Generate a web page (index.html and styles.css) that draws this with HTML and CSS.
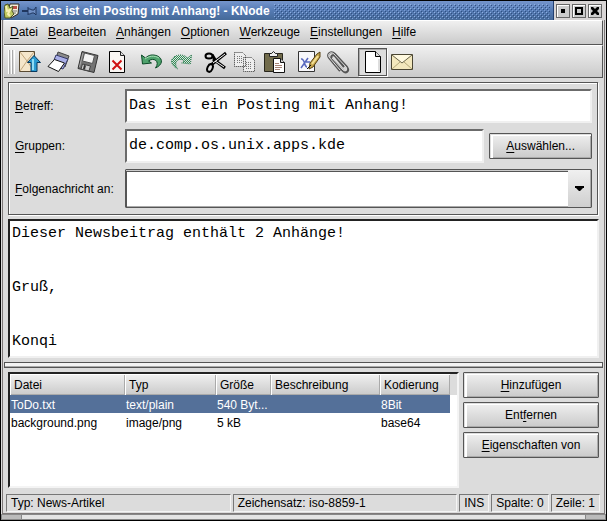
FILE: index.html
```html
<!DOCTYPE html>
<html lang="de">
<head>
<meta charset="utf-8">
<title>Das ist ein Posting mit Anhang! - KNode</title>
<link rel="stylesheet" href="styles.css">
</head>
<body>
<div class="window">
  <header class="titlebar">
    <svg class="app-icon" viewBox="0 0 16 16" width="16" height="16" aria-hidden="true">
      <path d="M6 1h9l-1 10-7 4-4-3z" fill="#f4f0dc" stroke="#332b22"/>
      <path d="M8 3h5v3H9z" fill="#bd5148"/><path d="M9 8h4M8 10h4" stroke="#777"/>
      <path d="M1 2l3-1 2 4 3-2-1 5 2 3-4 4H1L0 9z" fill="#bdc75f" stroke="#4d5425"/>
      <path d="M2 3l1 5 3-1-2 4 2 2" fill="none" stroke="#f6efb1" stroke-width="2"/>
    </svg>
    <svg class="pin" viewBox="0 0 16 12" width="16" height="12" aria-hidden="true">
      <path d="M1 6h6" stroke="#20375f" stroke-width="2"/>
      <path d="M7 2v8M7 4h2l2 1h2l2-3v8l-2-2h-2l-2 1H7" fill="#6f8fc4" stroke="#20375f"/>
    </svg>
    <h1>Das ist ein Posting mit Anhang! - KNode</h1>
    <div class="dots"></div>
    <div class="controls">
      <button aria-label="Minimieren"><svg viewBox="0 0 10 10" width="10" height="10"><path d="M3 3h4v4H3z"/></svg></button>
      <button aria-label="Maximieren"><svg viewBox="0 0 10 10" width="10" height="10"><path d="M2 2h6v6H2z" fill="none" stroke="#000" stroke-width="2"/></svg></button>
      <button aria-label="Schließen"><svg viewBox="0 0 10 10" width="10" height="10"><path d="M1 1h2l2 2 2-2h2v2L7 5l2 2v2H7L5 7 3 9H1V7l2-2-2-2z"/></svg></button>
    </div>
  </header>

  <div class="frame">
    <nav class="menubar">
      <button><u>D</u>atei</button>
      <button><u>B</u>earbeiten</button>
      <button><u>A</u>nhängen</button>
      <button><u>O</u>ptionen</button>
      <button><u>W</u>erkzeuge</button>
      <button><u>E</u>instellungen</button>
      <button><u>H</u>ilfe</button>
    </nav>

    <div class="toolbar" role="toolbar" aria-label="Werkzeugleiste">
      <span class="grip"></span>
      <button aria-label="Senden"><svg viewBox="0 0 24 24">
        <path d="M1.500 1.500h15v20h-15z" fill="#f5e6cb" stroke="#594a32"/>
        <path d="M2 2l7 9-7 10M16 2l-7 9 7 10" fill="none" stroke="#c2a67c"/>
        <path d="M16 5.500l6.500 7H19v9h-6v-9H9.500z" fill="#2b9bd1" stroke="#08395f"/>
        <path d="M15 9v11" stroke="#8fdcf5" stroke-width="2"/></svg></button>
      <button aria-label="In Warteschlange"><svg viewBox="0 0 24 24">
        <path d="M11 2l11 4-4 11-10-4z" fill="#8b8b8b" stroke="#444"/>
        <path d="M9 5l12 4-5 10-11-4z" fill="#a9afe8" stroke="#343967"/>
        <path d="M7.500 9.500l10 3.500-6 8.500-10.500-5z" fill="#fff" stroke="#111"/></svg></button>
      <button aria-label="Speichern"><svg viewBox="0 0 24 24">
        <path d="M6 1.500l16 4-4 17-16-4z" fill="#747474" stroke="#333"/>
        <path d="M8.500 3l10 2.500-2 8-10-2.500z" fill="#f4f4f4" stroke="#555"/>
        <path d="M6.500 14l8 2-1.500 5-8-2z" fill="#ccc" stroke="#444"/><path d="M8 15l2 .5-1 4-2-.5z" fill="#333"/>
        <path d="M3.500 17L7 3" stroke="#aaa"/></svg></button>
      <button aria-label="Löschen"><svg viewBox="0 0 24 24">
        <path d="M4.500 1.500h11l4 4v17h-15z" fill="#faf6f3" stroke="#000"/>
        <path d="M15.500 1.500v4h4" fill="#ddd" stroke="#222"/>
        <path d="M7.500 10.500l9 9M16.500 10.500l-9 9" stroke="#cf1212" stroke-width="2"/></svg></button>
      <span class="gap"></span>
      <button aria-label="Rückgängig"><svg viewBox="0 0 24 24">
        <path d="M1.500 5l1 9 9-1-3-2c5-4 12 0 7 7 7-3 8-9 2-12-5-2-9-1-12 2z" fill="#4fa36d" stroke="#0b4a27"/>
        <path d="M5 9c4-3 9-4 14-1" fill="none" stroke="#a6dfb4"/></svg></button>
      <button aria-label="Wiederherstellen" disabled><svg viewBox="0 0 24 24">
        <defs><pattern id="green" width="2" height="2" patternUnits="userSpaceOnUse"><path d="M0 0h1v1H0zM1 1h1v1H1z" fill="#2d9155"/></pattern></defs>
        <path d="M22.500 5l-1 9-9-1 3-2c-5-4-12 0-7 8-7-4-8-10-2-13 5-2 9-1 12 2z" fill="url(#green)" stroke="#398259" stroke-dasharray="1 1"/></svg></button>
      <span class="gap"></span>
      <button aria-label="Ausschneiden"><svg viewBox="0 0 24 24">
        <path d="M22 3L7 15M2.500 5.500h6l3 5M9 9l12 9" fill="none" stroke="#000" stroke-width="3"/>
        <path d="M21 4L9 13M11 11l9 6" stroke="#fff"/>
        <ellipse cx="5" cy="6" rx="3.500" ry="2.500" fill="#ddd" stroke="#000" stroke-width="2"/>
        <ellipse cx="6" cy="18" rx="2.500" ry="4" transform="rotate(25 6 18)" fill="#ddd" stroke="#000" stroke-width="2"/></svg></button>
      <button aria-label="Kopieren" disabled><svg viewBox="0 0 24 24">
        <g fill="#eee" stroke="#333" stroke-dasharray="1 1"><path d="M1.500 2.500h8l3 3v11h-11zM10.500 7.500h8l3 3v11h-11z"/><path d="M4 6.500h5M4 8.500h6M4 10.500h5M4 12.500h5M13 12.500h5M13 14.500h6M13 16.500h6M13 18.500h6" stroke="#777"/></g></svg></button>
      <button aria-label="Einfügen"><svg viewBox="0 0 24 24">
        <path d="M2.500 3.500h18v18h-18z" fill="#716b4b" stroke="#28261c"/>
        <path d="M7.500 6.500v-3h2l2-2 2 2h2v3z" fill="#eee" stroke="#222"/>
        <path d="M11.500 8.500h7l4 4v10h-11z" fill="#fff" stroke="#111"/><path d="M18.500 8.500v4h4" fill="#ccc" stroke="#111"/>
        <path d="M13 13.500h4M13 15.500h7M13 17.500h7M13 19.500h5" stroke="#a68375"/></svg></button>
      <span class="gap"></span>
      <button aria-label="Signatur"><svg viewBox="0 0 24 24">
        <path d="M1.500 1.500h16v20h-16z" fill="#f7f7fb" stroke="#333"/>
        <path d="M4 9c4-1 3 8 6 8M11 8L4 18M9 12h4" fill="none" stroke="#5868be" stroke-width="1.500"/>
        <path d="M12 19l1-6 7-9 3-2v5l-7 10z" fill="#c5a54d" stroke="#584313"/><path d="M15 14l6-8" stroke="#f2df94" stroke-width="2"/><path d="M10 19l4-4" stroke="#111"/></svg></button>
      <button aria-label="Datei anhängen"><svg viewBox="0 0 24 24">
        <path d="M14 21L3 8C0 4 5 0 9 4l12 13c3 4-1 7-4 4L6 9c-2-3 1-5 3-3l9 11" fill="none" stroke="#555" stroke-width="2"/>
        <path d="M14 20L3 7C1 4 5 1 8 4l12 13c2 3-1 5-3 3L6 8" fill="none" stroke="#ddd"/></svg></button>
      <span class="gap"></span>
      <button class="pressed" aria-label="Newsbeitrag" aria-pressed="true"><svg viewBox="0 0 24 24">
        <path d="M4.500 1.500h10l5 5v16h-15z" fill="#fff" stroke="#000"/><path d="M14.500 1.500v5h5" fill="#ddd" stroke="#000"/><path d="M18 9v12" stroke="#ddd" stroke-width="2"/></svg></button>
      <button aria-label="E-Mail"><svg viewBox="0 0 24 24">
        <path d="M1.500 4.500h21v15h-21z" fill="#f3e8bd" stroke="#4b4633"/>
        <path d="M2 19l8-7M22 19l-8-7" stroke="#b4a878"/>
        <path d="M2 5l10 8L22 5" fill="#fff9df" stroke="#6b654a"/></svg></button>
    </div>

    <main>
      <form class="headers">
        <label for="subject"><u>B</u>etreff:</label>
        <input class="wide" id="subject" value="Das ist ein Posting mit Anhang!">
        <label for="groups"><u>G</u>ruppen:</label>
        <input id="groups" value="de.comp.os.unix.apps.kde">
        <button class="push" type="button"><span><u>A</u>uswählen...</span></button>
        <label for="followup"><u>F</u>olgenachricht an:</label>
        <div class="combo wide">
          <select id="followup"><option></option></select>
          <span class="arrow"><svg viewBox="0 0 9 5" width="9" height="5"><path d="M0 0h9v2H8L5 5H4L1 2H0z"/></svg></span>
        </div>
      </form>
      <textarea class="editor" aria-label="Nachricht" spellcheck="false">Dieser Newsbeitrag enthält 2 Anhänge!


Gruß,


Konqi</textarea>
    </main>

    <div class="splitter" role="separator"></div>

    <section class="attachments">
      <div class="list">
        <table>
          <colgroup><col class="c-file"><col class="c-type"><col class="c-size"><col><col class="c-enc"><col class="c-end"></colgroup>
          <thead><tr><th>Datei</th><th>Typ</th><th>Größe</th><th>Beschreibung</th><th>Kodierung</th><th class="end"></th></tr></thead>
          <tbody>
            <tr class="selected"><td>ToDo.txt</td><td>text/plain</td><td>540 Byt...</td><td></td><td>8Bit</td><td class="end"></td></tr>
            <tr><td>background.png</td><td>image/png</td><td>5 kB</td><td></td><td>base64</td><td class="end"></td></tr>
          </tbody>
        </table>
      </div>
      <div class="actions">
        <button class="push"><span><u>H</u>inzufügen</span></button>
        <button class="push"><span>Ent<u>f</u>ernen</span></button>
        <button class="push"><span><u>E</u>igenschaften von</span></button>
      </div>
    </section>

    <footer class="status">
      <span>Typ: News-Artikel</span><span>Zeichensatz: iso-8859-1</span><span>INS</span><span>Spalte: 0</span><span>Zeile: 1</span>
    </footer>
  </div>
  <div class="resize"><i></i><b></b><i></i></div>
</div>
</body>
</html>
```
FILE: styles.css
```css
* { box-sizing: border-box; }
body {
  margin: 0;
  background: #000;
  color: #000;
  font: 12px/16px "Liberation Sans", Arial, sans-serif;
}
button, input, select, textarea { font: inherit; color: inherit; margin: 0; border-radius: 0; outline: 0; }
button { padding: 0; border: 0; background: none; }
u { text-underline-offset: 2px; text-decoration-thickness: 1px; text-decoration-skip-ink: none; }

.window {
  display: flex;
  flex-direction: column;
  min-height: 100vh;
  border: 1px solid #000;
  background: #dcdcdc;
}

.titlebar {
  display: flex;
  align-items: center;
  height: 19px;
  padding-left: 3px;
  background: linear-gradient(#7595cc, #557bb4 50%, #456998);
}
.app-icon { flex: none; }
.pin { flex: none; margin: 0 3px 0 1px; }
h1 { margin: 0; color: #fff; font-size: 12px; line-height: 18px; white-space: nowrap; }
.dots {
  flex: 1;
  align-self: stretch;
  margin: 3px 3px 1px 4px;
  background:
    linear-gradient(#8fafe4, #8fafe4) 0 0 / 0 0,
    conic-gradient(from 270deg at 1px 1px, #8fafe4 90deg, transparent 0) 0 0 / 4px 4px,
    conic-gradient(from 270deg at 1px 1px, #304f82 90deg, transparent 0) 1px 1px / 4px 4px,
    conic-gradient(from 270deg at 1px 1px, #7b9dd6 90deg, transparent 0) 2px 2px / 4px 4px,
    conic-gradient(from 270deg at 1px 1px, #304f82 90deg, transparent 0) 3px 3px / 4px 4px;
}
.controls {
  display: flex;
  gap: 2px;
  align-self: stretch;
  align-items: center;
  padding: 0 4px 0 2px;
  border-left: 1px solid #223f70;
  background: #d8d5d5;
}
.controls button {
  display: grid;
  place-items: center;
  width: 14px;
  height: 14px;
  border: 1px solid #666;
  box-shadow: inset 1px 1px #fff;
  background: #ccc;
}

.frame {
  flex: 1;
  display: flex;
  flex-direction: column;
  margin: 0 1px;
  border: solid #7d7878;
  border-width: 0 1px 1px;
  padding: 0 1px;
}
.menubar, .toolbar {
  display: flex;
  align-items: center;
  border-right: 1px solid #555;
  border-bottom: 1px solid #555;
  background: linear-gradient(#f0f0f0, #cacaca);
}
.menubar { gap: 10px; height: 25px; padding-left: 6px; border-top: 1px solid #fff; }
.menubar button { padding-bottom: 2px; }
.toolbar { height: 33px; padding-left: 4px; border-top: 1px solid #fff; }
.grip { width: 7px; height: 24px; background: repeating-linear-gradient(90deg, #fff 0 1px, #aaa 1px 2px, transparent 2px 3px); }
.toolbar .gap { width: 6px; }
.toolbar button { display: grid; place-items: center; width: 29px; height: 28px; }
.toolbar svg { width: 24px; height: 24px; }
.toolbar .pressed { border: 1px solid #555; box-shadow: inset 1px 1px #aaa, 1px 1px #fff; background: #ddd; }

main { flex: 1; display: flex; flex-direction: column; gap: 4px; padding: 4px; }
.headers {
  display: grid;
  grid-template-columns: auto 1fr auto;
  grid-template-rows: 34px 34px 39px;
  gap: 6px 5px;
  align-items: center;
  padding: 6px 5px 6px 6px;
  border: 1px solid #555;
  box-shadow: inset 1px 1px #fff, 1px 1px #fff;
  margin-right: 1px;
}
.wide { grid-column: span 2; }
.headers label { min-width: 105px; white-space: nowrap; }
.headers input {
  width: 100%;
  height: 34px;
  padding: 0 2px 2px;
  border: 2px solid;
  border-color: #6b6b6b #f0f0f0 #f0f0f0 #6b6b6b;
  background: #fff;
  font: 15px/18px "Liberation Mono", "Courier New", monospace;
}
.push {
  height: 26px;
  padding: 0 16px;
  border: 1px solid #555;
  border-radius: 1px;
  box-shadow: inset 1px 1px #ddd, inset 3px 2px #fff, inset -1px -1px #aaa;
  background: linear-gradient(#f0f0f0, #cacaca);
  white-space: nowrap;
}
.combo { display: grid; height: 39px; border: 1px solid #555; border-radius: 1px; box-shadow: inset -1px -1px #aaa; background: #fff; }
.combo select { grid-area: 1 / 1; width: 100%; border: 0; border-top: 1px solid #ccc; appearance: none; background: transparent; box-shadow: inset 1px 1px #555; }
.combo .arrow { grid-area: 1 / 1; justify-self: end; display: grid; place-items: center; width: 23px; pointer-events: none; background: linear-gradient(#f0f0f0, #cfcfcf); border-right: 1px solid #aaa; }

.editor {
  flex: 1;
  display: block;
  width: 100%;
  min-height: 138px;
  padding: 4px 2px 0;
  border: 2px solid;
  border-color: #222 #f0f0f0 #f0f0f0 #222;
  background: #fff;
  font: 15px/18px "Liberation Mono", "Courier New", monospace;
  resize: none;
}
.splitter { height: 6px; border: 1px solid #555; box-shadow: inset 0 -1px #aaa; background: #f4f4f4; }

.attachments { display: flex; gap: 4px; padding: 4px 4px 6px 4px; }
.list { flex: 1; min-height: 116px; border: 2px solid; border-color: #222 #f4f4f4 #f4f4f4 #222; background: #fff; }
table { width: 100%; border-collapse: collapse; table-layout: fixed; }
.c-file { width: 115px; }
.c-type { width: 91px; }
.c-size { width: 55px; }
.c-enc { width: 70px; }
.c-end { width: 7px; }
th {
  height: 21px;
  padding: 0 4px;
  background: linear-gradient(#f0f0f0, #cacaca);
  box-shadow: inset 1px 1px #fff, inset -1px -1px #aaa;
  font-weight: normal;
  text-align: left;
}
td { height: 18px; padding: 2px 1px 0; white-space: nowrap; }
.selected td { background: #547099; color: #fff; }
th.end { background: #dcdcdc; box-shadow: none; }
.selected td.end { background: #fff; }
.actions { display: flex; flex-direction: column; gap: 4px; width: 136px; }

.status { display: flex; gap: 2px; padding: 0 3px 1px 2px; }
.status span {
  height: 18px;
  padding: 0 4px;
  border: 1px solid;
  border-color: #777 #f4f4f4 #f4f4f4 #777;
  white-space: nowrap;
}
.status span:nth-child(-n+2) { flex: 1; }

.resize { display: flex; height: 6px; border: 1px solid #888; background: #e4e4e4; }
.resize b { flex: 1; border: solid #888; border-width: 0 1px; }
.resize i { width: 19px; background: #bbb; }
```
